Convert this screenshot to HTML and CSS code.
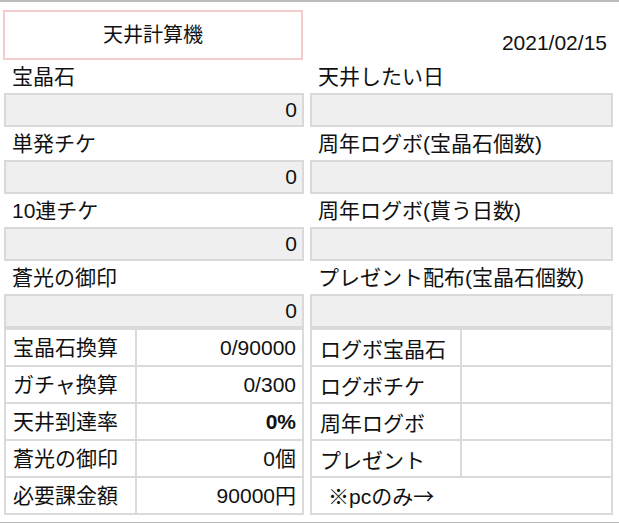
FILE: index.html
```html
<!DOCTYPE html>
<html lang="ja">
<head>
    <meta charset="UTF-8">
    <meta name="viewport" content="width=device-width, initial-scale=1.0">
    <title>天井計算機</title>
    <link rel="stylesheet" href="styles.css">
</head>
<body>
    <div class="page">
        <header class="header">
            <div class="title">天井計算機</div>
            <div class="date">2021/02/15</div>
        </header>

        <div class="columns">
            <div class="column">
                <div class="label">宝晶石</div>
                <div class="field">0</div>
                <div class="label">単発チケ</div>
                <div class="field">0</div>
                <div class="label">10連チケ</div>
                <div class="field">0</div>
                <div class="label">蒼光の御印</div>
                <div class="field">0</div>

                <div class="table result">
                    <div class="cell">宝晶石換算</div>
                    <div class="cell value">0/90000</div>
                    <div class="cell">ガチャ換算</div>
                    <div class="cell value">0/300</div>
                    <div class="cell">天井到達率</div>
                    <div class="cell value bold">0%</div>
                    <div class="cell">蒼光の御印</div>
                    <div class="cell value">0個</div>
                    <div class="cell">必要課金額</div>
                    <div class="cell value">90000円</div>
                </div>
            </div>

            <div class="column">
                <div class="label">天井したい日</div>
                <div class="field"></div>
                <div class="label">周年ログボ(宝晶石個数)</div>
                <div class="field"></div>
                <div class="label">周年ログボ(貰う日数)</div>
                <div class="field"></div>
                <div class="label">プレゼント配布(宝晶石個数)</div>
                <div class="field"></div>

                <div class="table bonus">
                    <div class="cell">ログボ宝晶石</div>
                    <div class="cell"></div>
                    <div class="cell">ログボチケ</div>
                    <div class="cell"></div>
                    <div class="cell">周年ログボ</div>
                    <div class="cell"></div>
                    <div class="cell">プレゼント</div>
                    <div class="cell"></div>
                    <div class="cell wide">※pcのみ<span class="arrow">→</span></div>
                </div>
            </div>
        </div>
    </div>
</body>
</html>
```

FILE: styles.css
```css
/* General */
body {
    margin: 0;
    font-family: 'Liberation Sans', 'Noto Sans CJK JP', sans-serif;
    font-size: 21px;
    color: #111;
    background-color: #ffffff;
}

.page {
    width: 619px;
    border-top: 2px solid #bdbdbd;
    border-bottom: 2px solid #bdbdbd;
    padding-bottom: 7px;
}

/* Header */
.header {
    display: flex;
    justify-content: space-between;
    align-items: flex-start;
    padding: 8px 12px 0 3px;
}

.title {
    box-sizing: border-box;
    width: 300px;
    height: 50px;
    border: 2px solid #f4cccc;
    display: flex;
    align-items: center;
    justify-content: center;
    line-height: 24px;
    font-size: 20px;
}

.date {
    margin-top: 21px;
    line-height: 24px;
}

/* Input columns */
.columns {
    display: grid;
    grid-template-columns: 300px 303px;
    column-gap: 6px;
    padding-left: 4px;
}

.column {
    display: flex;
    flex-direction: column;
}

.label {
    height: 33px;
    line-height: 33px;
    padding-left: 8px;
    white-space: nowrap;
}

.field {
    box-sizing: border-box;
    height: 34px;
    line-height: 30px;
    background-color: #efefef;
    border: 2px solid #d9d9d9;
    text-align: right;
    padding-right: 5px;
}

/* Result tables */
.table {
    display: grid;
    gap: 2px;
    padding: 2px;
    background-color: #dadada;
    grid-auto-rows: 35px;
}

.result {
    grid-template-columns: 129px 1fr;
}

.bonus {
    grid-template-columns: 148px 1fr;
}

.cell {
    background-color: #ffffff;
    line-height: 35px;
    padding-left: 7px;
    white-space: nowrap;
}

.result .value {
    text-align: right;
    padding: 0 6px 0 0;
}

.bold {
    font-weight: bold;
}

.bonus .cell {
    line-height: 30px;
    padding-top: 5px;
    padding-left: 8px;
}

.bonus .wide {
    grid-column: 1 / 3;
    padding-top: 2px;
    padding-left: 16px;
}

.arrow {
    font-family: 'Noto Sans CJK JP', sans-serif;
}
```
